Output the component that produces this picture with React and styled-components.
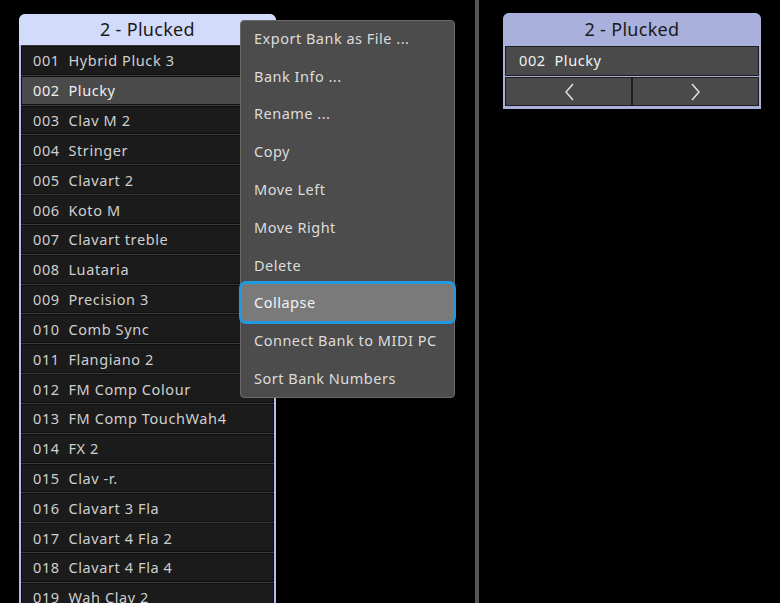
import React from "react";
import styled, { createGlobalStyle } from "styled-components";

const Global = createGlobalStyle`
  html, body { margin: 0; padding: 0; background: #000; }
  body { font-family: "Noto Sans", "Open Sans", sans-serif; overflow: hidden; }
  #root { width: 780px; height: 603px; }
`;

const Page = styled.div`
  display: flex;
  width: 780px;
  height: 603px;
  background: #000;
  position: relative;
  overflow: hidden;
`;

const LeftArea = styled.div`
  width: 475px;
  padding: 14px 0 0 19px;
  box-sizing: border-box;
`;

const Divider = styled.div`
  width: 4px;
  background: #555;
`;

const RightArea = styled.div`
  flex: 1;
  padding: 13px 0 0 24px;
  box-sizing: border-box;
`;

const Panel = styled.div`
  width: ${p => p.$w}px;
  background: ${p => p.$border};
  border-radius: 7px 7px 0 0;
  padding: 0 2px 3px;
  box-sizing: border-box;
  display: flex;
  flex-direction: column;
`;

const Header = styled.div`
  height: ${p => p.$h}px;
  background: ${p => p.$bg};
  border-radius: 6px 6px 0 0;
  margin: 0 -2px;
  display: flex;
  align-items: center;
  justify-content: center;
  font-size: 18px;
  color: #1a1a1a;
  letter-spacing: 0.3px;
  padding-bottom: 1px;
  box-sizing: border-box;
`;

const List = styled.div`
  display: flex;
  flex-direction: column;
  gap: 1px;
  background: #3a3a3a;
  border-top: 1px solid #3a3a3a;
`;

const Row = styled.div`
  height: 28.83px;
  box-sizing: border-box;
  border: 1px solid #0e0e0e;
  background: ${p => (p.$sel ? "#4a4a4a" : "#1b1b1b")};
  color: ${p => (p.$sel ? "#f0f0f0" : "#cfcfcf")};
  font-size: 14.5px;
  letter-spacing: 0.6px;
  display: flex;
  align-items: center;
  padding-left: 11px;
  white-space: pre;
`;

const CurRow = styled(Row)`
  height: 30px;
  margin-top: 1px;
  padding-left: 13px;
  padding-bottom: 2px;
  border-color: #1e1e1e;
  background: #4a4a4a;
  color: #f2f2f2;
`;

const NavRow = styled.div`
  display: grid;
  grid-template-columns: 1fr 1fr;
  margin-top: 1px;
`;

const NavButton = styled.div`
  height: 29px;
  box-sizing: border-box;
  border: 1px solid #1e1e1e;
  background: #4a4a4a;
  display: flex;
  align-items: center;
  justify-content: center;
`;

const Menu = styled.div`
  position: absolute;
  left: 240px;
  top: 20px;
  width: 215px;
  height: 378px;
  box-sizing: border-box;
  background: #4c4c4c;
  border: 1px solid #6a6a6a;
  border-radius: 4px;
  display: flex;
  flex-direction: column;
`;

const MenuItem = styled.div`
  flex: none;
  height: 37.8px;
  display: flex;
  align-items: center;
  padding-left: 13px;
  font-size: 14.5px;
  letter-spacing: 0.5px;
  color: #dcdcdc;
  box-sizing: border-box;
  &:first-child { margin-top: -2px; }
  ${p =>
    p.$active &&
    `
    margin: -3px -2px;
    padding-left: 12px;
    height: 43.8px;
    background: #7a7a7a;
    border: 3px solid #1f9ae2;
    border-radius: 7px;
    color: #f2f2f2;
  `}
`;

const presets = [
  "Hybrid Pluck 3",
  "Plucky",
  "Clav M 2",
  "Stringer",
  "Clavart 2",
  "Koto M",
  "Clavart treble",
  "Luataria",
  "Precision 3",
  "Comb Sync",
  "Flangiano 2",
  "FM Comp Colour",
  "FM Comp TouchWah4",
  "FX 2",
  "Clav -r.",
  "Clavart 3 Fla",
  "Clavart 4 Fla 2",
  "Clavart 4 Fla 4",
  "Wah Clav 2",
];

const menuItems = [
  "Export Bank as File ...",
  "Bank Info ...",
  "Rename ...",
  "Copy",
  "Move Left",
  "Move Right",
  "Delete",
  "Collapse",
  "Connect Bank to MIDI PC",
  "Sort Bank Numbers",
];

const Chevron = ({ dir }) => (
  <svg width="14" height="20" viewBox="0 0 14 20">
    <path
      d={dir === "left" ? "M11 2 L4 10 L11 18" : "M3 2 L10 10 L3 18"}
      fill="none"
      stroke="#e0e0e0"
      strokeWidth="1.5"
    />
  </svg>
);

export default function App() {
  return (
    <>
      <Global />
      <Page>
        <LeftArea>
          <Panel $w={257} $border="#b4bbe6">
            <Header $h={31} $bg="#d3dbfb">2 - Plucked</Header>
            <List>
              {presets.map((name, i) => (
                <Row key={i} $sel={i === 1}>
                  {String(i + 1).padStart(3, "0") + "  " + name}
                </Row>
              ))}
            </List>
          </Panel>
        </LeftArea>
        <Divider />
        <RightArea>
          <Panel $w={258} $border="#a9b0dc">
            <Header $h={32} $bg="#a9b0dc">2 - Plucked</Header>
            <CurRow>{"002  Plucky"}</CurRow>
            <NavRow>
              <NavButton><Chevron dir="left" /></NavButton>
              <NavButton><Chevron dir="right" /></NavButton>
            </NavRow>
          </Panel>
        </RightArea>
        <Menu>
          {menuItems.map((m, i) => (
            <MenuItem key={i} $active={m === "Collapse"}>{m}</MenuItem>
          ))}
        </Menu>
      </Page>
    </>
  );
}
